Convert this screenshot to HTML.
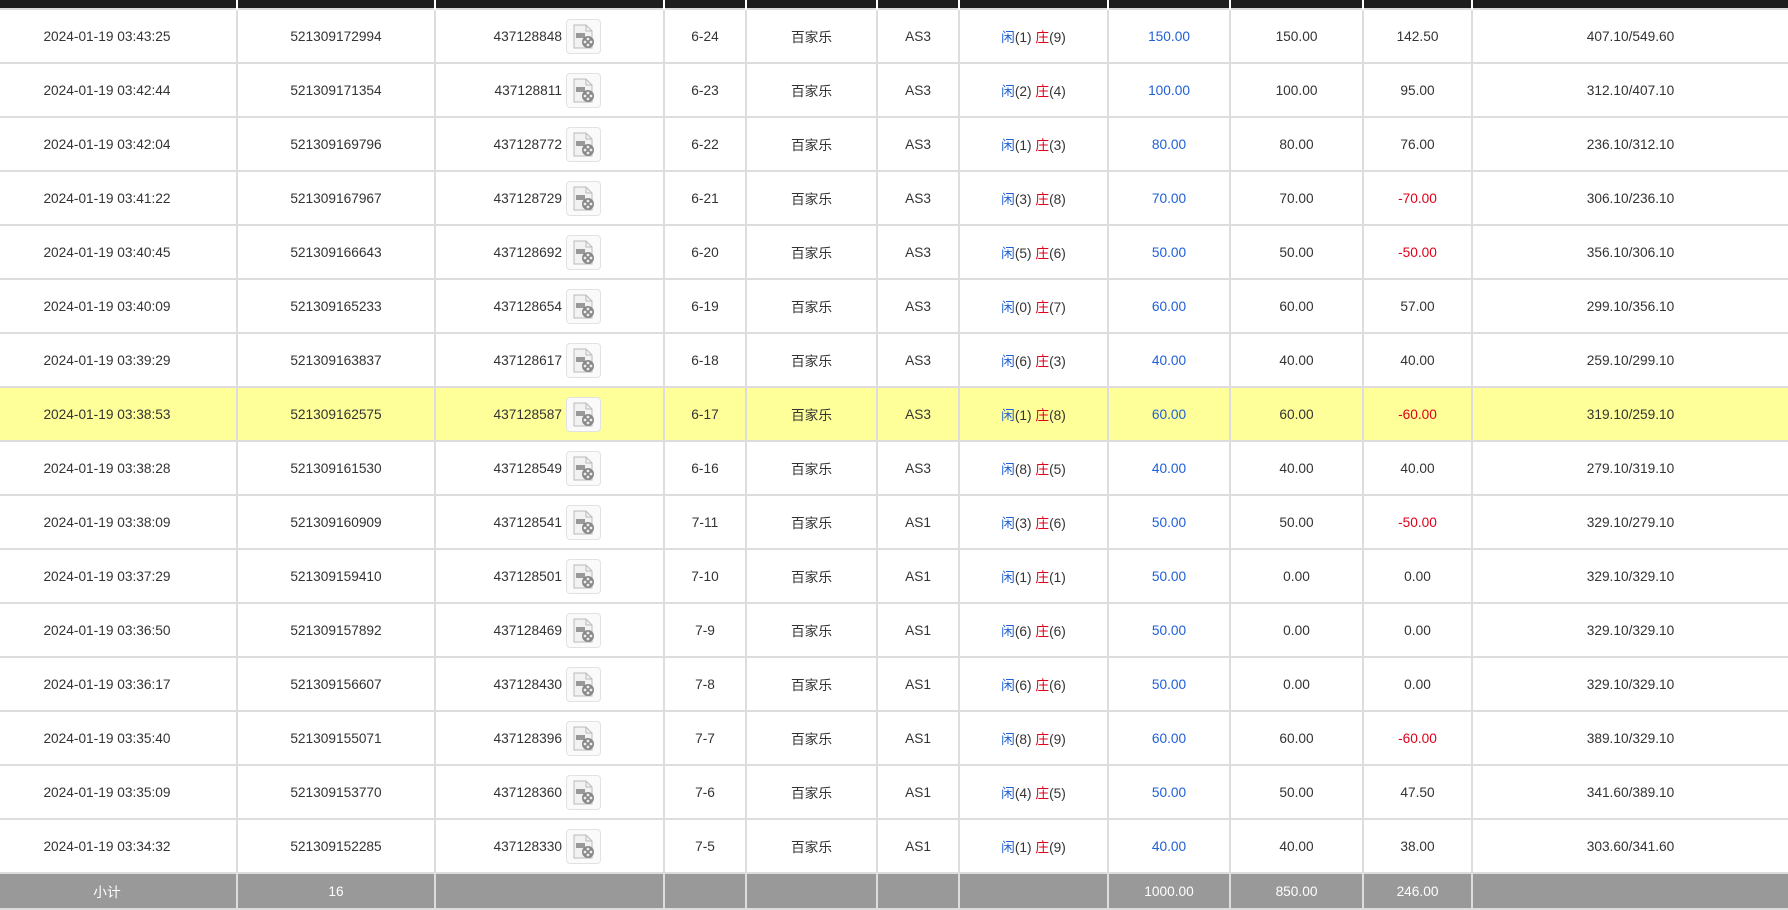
<!DOCTYPE html>
<html><head><meta charset="utf-8"><style>
html,body{margin:0;padding:0;background:#fff;width:1788px;height:910px;overflow:hidden}
table{border-collapse:collapse;table-layout:fixed;width:1790px;margin-left:-2px;font-family:"Liberation Sans","Noto Sans CJK SC",sans-serif;font-size:13.7px;color:#333}
td{border:2px solid #ddd;text-align:center;height:52px;padding:0;white-space:nowrap}
td:first-child{padding-right:22px}
tr.h td{height:8px;background:#1e1e1e;border-color:#fff;border-top:0;border-bottom:0}
tr.y td{background:#ffff99}
tr.s td{background:#999;color:#fff;height:34px}
.b{color:#1f5fd8}.r{color:#e0001a}
.ic{display:inline-block;width:33px;height:33px;border:1px solid #e2e2e2;border-radius:4px;background:#fafafa;vertical-align:middle;margin-left:4px;position:relative}
.ic svg{position:absolute;left:5px;top:4px}
.n{display:inline-block;vertical-align:middle;text-align:right;width:120px;margin-left:-56px}
</style></head><body>
<table>
<colgroup><col style="width:238px"><col style="width:198px"><col style="width:229px"><col style="width:82px"><col style="width:131px"><col style="width:82px"><col style="width:149px"><col style="width:122px"><col style="width:133px"><col style="width:109px"><col style="width:317px"></colgroup>
<tr class="h"><td></td><td></td><td></td><td></td><td></td><td></td><td></td><td></td><td></td><td></td><td></td></tr>
<tbody id="tb"></tbody>
</table>
<script>
var d=[["03:43:25","521309172994","437128848","6-24","AS3",1,9,"150.00","150.00","142.50","407.10/549.60"],
["03:42:44","521309171354","437128811","6-23","AS3",2,4,"100.00","100.00","95.00","312.10/407.10"],
["03:42:04","521309169796","437128772","6-22","AS3",1,3,"80.00","80.00","76.00","236.10/312.10"],
["03:41:22","521309167967","437128729","6-21","AS3",3,8,"70.00","70.00","-70.00","306.10/236.10"],
["03:40:45","521309166643","437128692","6-20","AS3",5,6,"50.00","50.00","-50.00","356.10/306.10"],
["03:40:09","521309165233","437128654","6-19","AS3",0,7,"60.00","60.00","57.00","299.10/356.10"],
["03:39:29","521309163837","437128617","6-18","AS3",6,3,"40.00","40.00","40.00","259.10/299.10"],
["03:38:53","521309162575","437128587","6-17","AS3",1,8,"60.00","60.00","-60.00","319.10/259.10"],
["03:38:28","521309161530","437128549","6-16","AS3",8,5,"40.00","40.00","40.00","279.10/319.10"],
["03:38:09","521309160909","437128541","7-11","AS1",3,6,"50.00","50.00","-50.00","329.10/279.10"],
["03:37:29","521309159410","437128501","7-10","AS1",1,1,"50.00","0.00","0.00","329.10/329.10"],
["03:36:50","521309157892","437128469","7-9","AS1",6,6,"50.00","0.00","0.00","329.10/329.10"],
["03:36:17","521309156607","437128430","7-8","AS1",6,6,"50.00","0.00","0.00","329.10/329.10"],
["03:35:40","521309155071","437128396","7-7","AS1",8,9,"60.00","60.00","-60.00","389.10/329.10"],
["03:35:09","521309153770","437128360","7-6","AS1",4,5,"50.00","50.00","47.50","341.60/389.10"],
["03:34:32","521309152285","437128330","7-5","AS1",1,9,"40.00","40.00","38.00","303.60/341.60"]];
var ic='<span class="ic"><svg width="24" height="26" viewBox="0 0 24 26"><path d="M2 1h12l6 6v17H2z" fill="#f2f2f2" stroke="#bbb"/><path d="M14 1v6h6" fill="none" stroke="#bbb"/><rect x="4" y="9" width="9" height="5" fill="#999"/><circle cx="16" cy="18" r="6" fill="#888"/><circle cx="16" cy="15" r="1.4" fill="#eee"/><circle cx="13" cy="18" r="1.4" fill="#eee"/><circle cx="19" cy="18" r="1.4" fill="#eee"/><circle cx="16" cy="21" r="1.4" fill="#eee"/></svg></span>';
var h='';
d.forEach(function(r,i){
h+='<tr'+(i==7?' class="y"':'')+'><td>2024-01-19 '+r[0]+'</td><td>'+r[1]+'</td><td><span class="n">'+r[2]+'</span>'+ic+'</td><td>'+r[3]+'</td><td>百家乐</td><td>'+r[4]+'</td><td><span class="b">闲</span>('+r[5]+') <span class="r">庄</span>('+r[6]+')</td><td class="b">'+r[7]+'</td><td>'+r[8]+'</td><td'+(r[9][0]=='-'?' class="r"':'')+'>'+r[9]+'</td><td>'+r[10]+'</td></tr>';
});
h+='<tr class="s"><td>小计</td><td>16</td><td></td><td></td><td></td><td></td><td></td><td>1000.00</td><td>850.00</td><td>246.00</td><td></td></tr>';
document.getElementById('tb').innerHTML=h;
</script>
</body></html>
